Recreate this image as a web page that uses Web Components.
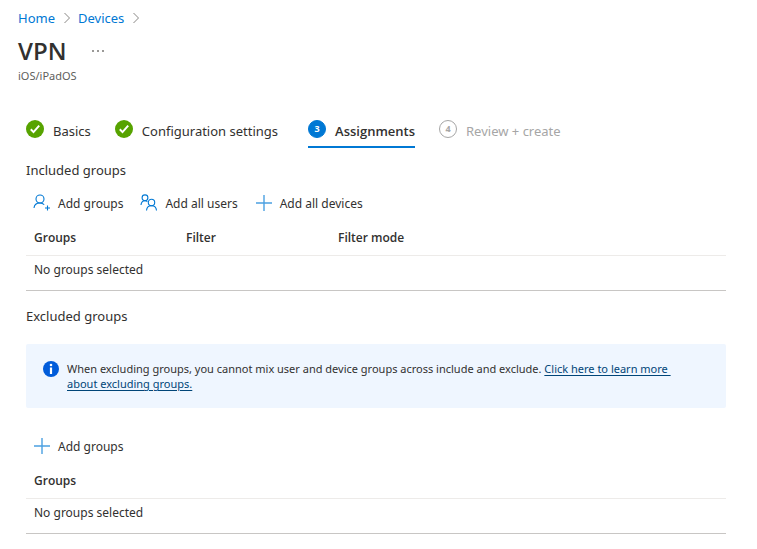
<!DOCTYPE html>
<html lang="en">
<head>
<meta charset="utf-8">
<title>VPN - iOS/iPadOS</title>
<style>
body { margin: 0; background: #fff; color: #323130; font: 13px/20px "Noto Sans", sans-serif; }
</style>
</head>
<body>
<vpn-page></vpn-page>
<script>
const define = (name, html, setup) => customElements.define(name, class extends HTMLElement {
  constructor() {
    super();
    this.attachShadow({ mode: "open" }).innerHTML = html;
  }
  connectedCallback() { if (setup) setup(this, this.shadowRoot); }
});

const icons = {
  chevron: '<svg width="8" height="12" viewBox="0 0 8 12"><path d="M1.5 1l5 5-5 5" fill="none" stroke="#8a8886"/></svg>',
  check: '<svg width="18" height="18" viewBox="0 0 18 18"><circle cx="9" cy="9" r="9" fill="#57a300"/><path d="M4.800 9.300l2.700 2.800 5.700-6.500" fill="none" stroke="#fff" stroke-width="2"/></svg>',
  person: '<svg width="18" height="18" viewBox="0 0 18 18"><g fill="none" stroke="#0078d4" stroke-width="1.100"><circle cx="7" cy="5" r="4"/><path d="M1 14c.3-3.200 2.700-5 6-5 1.800 0 3.200.7 4.200 1.700M14.500 11.500v5M12 14h5"/></g></svg>',
  people: '<svg width="18" height="18" viewBox="0 0 18 18"><g fill="none" stroke="#0078d4" stroke-width="1.100"><circle cx="5" cy="3.800" r="2.900"/><path d="M1 11c.2-2.600 1.700-4.300 4-4.300 1 0 1.800.3 2.400.9"/><circle cx="11.500" cy="8.500" r="3.200"/><path d="M6.500 16.500c.2-3 2.200-4.800 5-4.800s4.800 1.800 5 4.800"/></g></svg>',
  plus: '<svg width="18" height="18" viewBox="0 0 18 18"><path d="M9 1v16M1 9h16" stroke="#4ba0e1" stroke-width="1.400"/></svg>',
  info: '<svg width="16" height="16" viewBox="0 0 16 16"><circle cx="8" cy="8" r="8" fill="#015cda"/><circle cx="8" cy="4" r="1.300" fill="#fff"/><path d="M8 6.500v6.500" stroke="#fff" stroke-width="2.200"/></svg>'
};

define("crumb-link", `<style>
  :host { display: flex; align-items: center; gap: 8px; }
  a { color: #0078d4; text-decoration: none; }
  svg { display: block; }
</style><a href="#"><slot></slot></a>${icons.chevron}`);

define("page-title", `<style>
  :host { display: block; }
  div { display: flex; align-items: center; gap: 21px; margin-top: 7px; }
  h1 { margin: 0; font: 600 24px/32px "Open Sans", sans-serif; }
  button { display: flex; gap: 3px; padding: 8px 4px; border: 0; background: none; }
  i { width: 2px; height: 2px; background: #797775; border-radius: 1px; }
  p { margin: 1px 0 0; font-size: 11px; line-height: 16px; color: #605e5c; }
</style><div><h1><slot></slot></h1><button aria-label="More actions"><i></i><i></i><i></i></button></div><p><slot name="sub"></slot></p>`);

define("wizard-step", `<style>
  :host { display: block; }
  button { display: flex; align-items: center; gap: 9px; padding: 0 0 3px; border: 0; border-bottom: 2px solid transparent; background: none; color: inherit; font: inherit; line-height: 24px; white-space: nowrap; }
  svg { display: block; }
  .mark { display: flex; margin-bottom: 5px; }
  .num { box-sizing: border-box; width: 18px; height: 18px; border-radius: 9px; justify-content: center; font-size: 9px; line-height: 16px; font-weight: 700; border: 1px solid #a6a6a6; }
  :host([state=current]) { margin-left: 6px; }
  :host([state=current]) button { border-color: #0078d4; font-family: "Open Sans", sans-serif; font-weight: 600; }
  :host([state=current]) .num { background: #0078d4; color: #fff; border-color: #0078d4; }
  :host([state=next]) { color: #a6a6a6; }
</style><button role="tab"><span class="mark"></span><span><slot></slot></span></button>`, (el, root) => {
  const mark = root.querySelector(".mark");
  if (el.getAttribute("state") === "done") mark.innerHTML = icons.check;
  else { mark.classList.add("num"); mark.textContent = el.getAttribute("step"); }
});

define("tool-button", `<style>
  :host { display: block; }
  button { display: flex; align-items: center; gap: 7px; padding: 0; border: 0; background: none; color: inherit; font: inherit; font-size: 12px; line-height: 20px; white-space: nowrap; }
  svg { display: block; margin-bottom: 2px; }
</style><button><span class="icon"></span><slot></slot></button>`, (el, root) => {
  root.querySelector(".icon").innerHTML = icons[el.getAttribute("icon")];
});

define("group-table", `<style>
  :host { display: block; }
  table { width: 100%; border-collapse: collapse; table-layout: fixed; font-size: 12px; line-height: 18px; }
  th, td { text-align: left; }
  th { padding: 10px 8px 8px; font-family: "Open Sans", sans-serif; font-weight: 600; border-bottom: 1px solid #edebe9; }
  th:not(:last-child) { width: 136px; }
  td { padding: 5px 8px 11px; border-bottom: 1px solid #c8c6c4; }
</style><table><thead><tr></tr></thead><tbody><tr><td><slot></slot></td></tr></tbody></table>`, (el, root) => {
  const names = el.getAttribute("columns").split(",");
  root.querySelector("thead tr").innerHTML = names.map(n => `<th scope="col">${n}</th>`).join("");
  root.querySelector("td").colSpan = names.length;
});

define("info-banner", `<style>
  :host { display: flex; gap: 8px; padding: 17px; background: #eff6ff; border-radius: 2px; font-size: 11px; line-height: 15px; }
  svg { display: block; flex: none; }
</style>${icons.info}<div><slot></slot></div>`);

define("vpn-page", `<style>
  :host { display: block; padding: 8px 31px 16px 18px; }
  nav { display: flex; gap: 7px; }
  main { padding-left: 8px; }
  .steps { display: flex; gap: 24px; margin-top: 35px; }
  .tools { display: flex; gap: 17px; padding-left: 7px; }
  h2 { margin: 0; font-size: 13px; line-height: 20px; font-weight: 400; }
  .included { margin: 12px 0 14px; }
  .excluded { margin: 15px 0 18px; }
  info-banner { margin-bottom: 29px; }
  group-table { margin-top: 5px; }
  a { color: #004578; text-underline-offset: 2px; }
</style>
<nav aria-label="Breadcrumb"><crumb-link>Home</crumb-link><crumb-link>Devices</crumb-link></nav>
<page-title>VPN<span slot="sub">iOS/iPadOS</span></page-title>
<main>
  <div class="steps" role="tablist">
    <wizard-step state="done">Basics</wizard-step>
    <wizard-step state="done">Configuration settings</wizard-step>
    <wizard-step state="current" step="3">Assignments</wizard-step>
    <wizard-step state="next" step="4">Review + create</wizard-step>
  </div>
  <h2 class="included">Included groups</h2>
  <div class="tools"><tool-button icon="person">Add groups</tool-button><tool-button icon="people">Add all users</tool-button><tool-button icon="plus">Add all devices</tool-button></div>
  <group-table columns="Groups,Filter,Filter mode">No groups selected</group-table>
  <h2 class="excluded">Excluded groups</h2>
  <info-banner>When excluding groups, you cannot mix user and device groups across include and exclude. <a href="#">Click here to learn more&nbsp;<br>about excluding groups.</a></info-banner>
  <div class="tools"><tool-button icon="plus">Add groups</tool-button></div>
  <group-table columns="Groups">No groups selected</group-table>
</main>`);
</script>
</body>
</html>
